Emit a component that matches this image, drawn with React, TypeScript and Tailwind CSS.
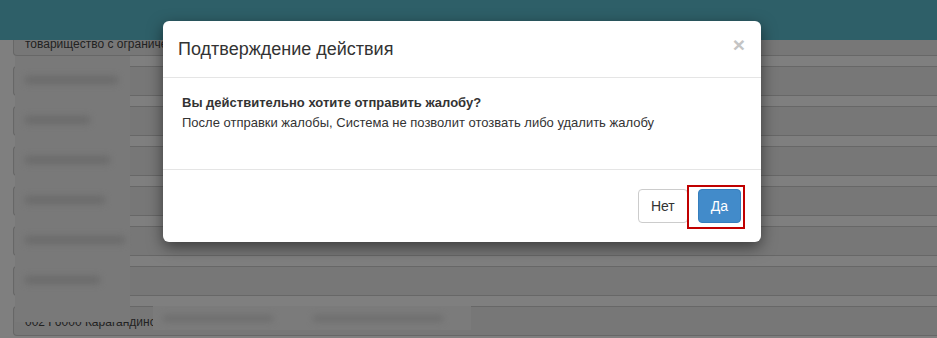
import React from 'react'

const blobs = [93, 65, 85, 80, 100, 75]

const Row: React.FC<{ children?: React.ReactNode; first?: boolean }> = ({ children, first }) => (
  <div className={`ml-[13px] ${first ? 'h-[30px]' : 'h-[30px] mt-[10px]'} rounded-l-[4px] border border-r-0 border-[#676767] bg-[#777777] flex items-center pl-[11px] text-[12px] text-[#222] whitespace-nowrap overflow-hidden`}>
    {children}
  </div>
)

export default function App() {
  return (
    <div
      className="relative w-[937px] h-[338px] overflow-hidden bg-[#7f7f7f]"
      style={{ fontFamily: '"Liberation Sans", Arial, sans-serif' }}
    >
      {/* Fixed navbar under backdrop */}
      <div className="absolute top-0 left-0 right-0 h-[40px] bg-[#2e5f68] z-10" />

      {/* Page form rows */}
      <div className="pt-[26px]">
        <Row first>
          <span className="pt-[5px]">товарищество с ограниченной ответственностью</span>
        </Row>
        <Row />
        <Row />
        <Row />
        <Row />
        <Row />
        <Row />
        <Row>
          <span className="pt-[1px]">002 Г6000 Карагандинская область</span>
        </Row>
      </div>

      {/* Blurred column */}
      <div className="absolute left-[15px] top-[56px] w-[115px] h-[266px] bg-[#797979] flex flex-col pt-[20px] gap-[32px]">
        {blobs.map((w, i) => (
          <div key={i} className="ml-[10px] h-[8px] rounded-full bg-[#6b6b6b] blur-[3px]" style={{ width: w }} />
        ))}
      </div>
      {/* Blurred strip on last row */}
      <div className="absolute left-[153px] top-[306px] w-[318px] h-[24px] bg-[#7b7b7b] flex items-center gap-[40px] px-[10px]">
        <div className="h-[7px] w-[110px] rounded-full bg-[#6e6e6e] blur-[3px]" />
        <div className="h-[7px] w-[130px] rounded-full bg-[#6e6e6e] blur-[3px]" />
      </div>

      {/* Modal */}
      <div className="absolute left-[163px] top-[21px] w-[598px] h-[221px] z-20 bg-white rounded-[6px] shadow-[0_5px_15px_rgba(0,0,0,0.5)] flex flex-col text-[#333]">
        <div className="flex items-start justify-between px-[15px] pt-[15px] pb-[15px] border-b border-[#e5e5e5]">
          <h4 className="text-[18px] leading-[26px]">Подтверждение действия</h4>
          <span className="text-[21px] leading-[21px] font-bold text-[#c4c4c4] -mt-[2px] mr-[1px]">×</span>
        </div>
        <div className="px-[19px] pt-[15px] h-[91px] text-[13px] leading-[20px]">
          <p className="font-bold">Вы действительно хотите отправить жалобу?</p>
          <p>После отправки жалобы, Система не позволит отозвать либо удалить жалобу</p>
        </div>
        <div className="relative flex-1 border-t border-[#e5e5e5] flex justify-end items-start gap-[10px] pt-[19px] pr-[20px]">
          <button className="h-[34px] px-[12px] rounded-[4px] border border-[#ccc] bg-white text-[14px] text-[#333]">
            Нет
          </button>
          <button className="h-[34px] px-[12px] rounded-[4px] border border-[#357ebd] bg-[#428bca] text-[14px] text-white">
            Да
          </button>
          {/* annotation frame */}
          <div className="absolute left-[524px] top-[15px] w-[58px] h-[44px] border-2 border-[#c00000]" />
        </div>
      </div>
    </div>
  )
}
